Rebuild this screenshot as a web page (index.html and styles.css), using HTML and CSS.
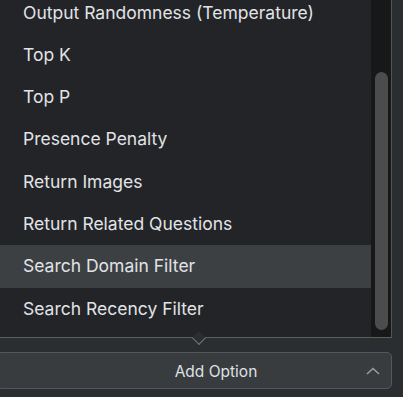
FILE: index.html
```html
<!DOCTYPE html>
<html lang="en">
<head>
  <meta charset="UTF-8">
  <title>Add Option</title>
  <link rel="stylesheet" href="styles.css">
</head>
<body>
  <div class="menu">
    <ul class="list">
      <li>Output Randomness (Temperature)</li>
      <li>Top K</li>
      <li>Top P</li>
      <li>Presence Penalty</li>
      <li>Return Images</li>
      <li>Return Related Questions</li>
      <li class="hover">Search Domain Filter</li>
      <li>Search Recency Filter</li>
    </ul>
    <div class="track"><div class="thumb"></div></div>
    <span class="pointer"></span>
  </div>

  <button class="add-btn">
    <span class="label">Add Option</span>
    <svg class="chev" width="16" height="10" viewBox="0 0 16 10">
      <path d="M2 8 L8 2.5 L14 8" fill="none" stroke="#9a9c9e" stroke-width="1.6"/>
    </svg>
  </button>
</body>
</html>
```

FILE: styles.css
```css
* { margin: 0; padding: 0; box-sizing: border-box; }
body {
  font-family: Inter, 'Noto Sans', sans-serif;
  background: #2b2e31;
  color: #e1e3e6;
  height: 397px;
  overflow: hidden;
}

.menu {
  position: relative;
  display: flex;
  width: 392px;
  height: 338px;
  background: #232427;
  border-bottom: 1px solid #5f5e59;
  border-right: 1px solid #55544f;
}
.list {
  flex: 1;
  list-style: none;
  overflow: hidden;
}
.list li {
  height: 42.3px;
  line-height: 42.3px;
  padding-left: 23px;
  font-size: 17.5px;
  white-space: nowrap;
}
.list li:first-child {
  margin-top: -8.5px;
}
.list li.hover {
  background: #3c4043;
}
.track {
  width: 20px;
  background: #17181a;
  padding: 72px 3px 0 4px;
}
.thumb {
  height: 258px;
  border-radius: 7px;
  background: #4b4c4e;
}
.pointer {
  position: absolute;
  left: 194px;
  bottom: -6px;
  width: 10px;
  height: 10px;
  background: #2b2e31;
  border-right: 1.5px solid #77766f;
  border-bottom: 1.5px solid #77766f;
  transform: rotate(45deg);
}

.add-btn {
  display: flex;
  align-items: center;
  margin: 14px 0 0 -4px;
  width: 396px;
  height: 37px;
  background: #393c3f;
  border: 1px solid #55575a;
  border-radius: 5px;
  color: #dfe1e3;
  font-family: inherit;
  font-size: 15.5px;
  padding: 1px 10px 0 70px;
}
.add-btn .label {
  flex: 1;
  text-align: center;
}
.chev {
  display: block;
}
```
